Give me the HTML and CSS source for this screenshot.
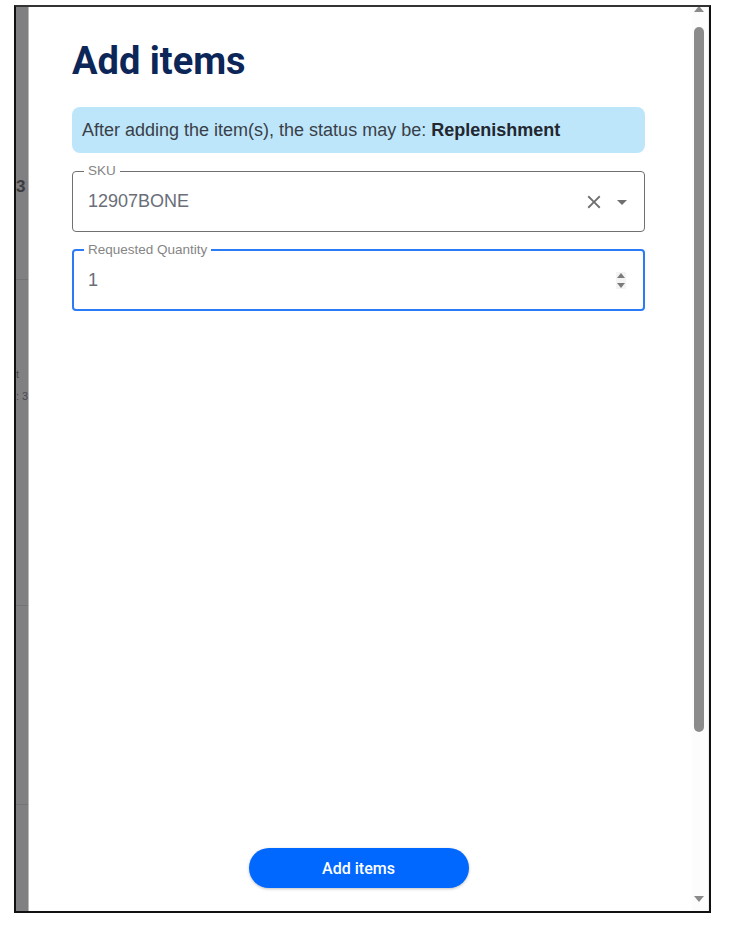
FILE: index.html
```html
<!DOCTYPE html>
<html lang="en">
<head>
<meta charset="utf-8">
<title>Add items</title>
<link rel="stylesheet" href="styles.css">
</head>
<body>
<div class="frame">
  <div class="backdrop">
    <div class="bg-row bg-row-1"><div class="bg-text bg-three">3</div></div>
    <div class="bg-row bg-row-2">
      <div class="bg-text bg-faint bg-faint-1">t</div>
      <div class="bg-text bg-faint bg-faint-2">: 3</div>
    </div>
    <div class="bg-row bg-row-3"></div>
    <div class="bg-row bg-row-4"></div>
  </div>
  <div class="dialog">
    <div class="content">
      <h1 class="title">Add items</h1>
      <div class="info">After adding the item(s), the status may be: <strong>Replenishment</strong></div>
      <div class="field field-sku">
        <span class="field-label">SKU</span>
        <span class="field-value">12907BONE</span>
        <svg class="icon-close" viewBox="0 0 24 24" width="22" height="22" aria-hidden="true"><path d="M19 6.41L17.59 5 12 10.59 6.41 5 5 6.41 10.59 12 5 17.59 6.41 19 12 13.41 17.59 19 19 17.59 13.41 12z"/></svg>
        <svg class="icon-drop" viewBox="0 0 24 24" width="24" height="24" aria-hidden="true"><path d="M7 10l5 5 5-5z"/></svg>
      </div>
      <div class="field field-qty">
        <span class="field-label">Requested Quantity</span>
        <span class="field-value">1</span>
        <span class="spinner"><svg viewBox="0 0 10 17" width="10" height="17" aria-hidden="true"><path d="M5 1L9 6H1z"/><path d="M1 11h8l-4 5z"/></svg></span>
      </div>
      <div class="spacer"></div>
      <button class="btn-add" type="button">Add items</button>
    </div>
    <div class="scrollbar">
      <svg class="sb-arrow sb-up" viewBox="0 0 10 6" width="10" height="6" aria-hidden="true"><path d="M5 0L10 6H0z"/></svg>
      <div class="sb-thumb"></div>
      <div class="sb-rest"></div>
      <svg class="sb-arrow sb-down" viewBox="0 0 10 6" width="10" height="6" aria-hidden="true"><path d="M0 0h10L5 6z"/></svg>
    </div>
  </div>
</div>
</body>
</html>
```

FILE: styles.css
```css
* { box-sizing: border-box; }
html, body { margin: 0; padding: 0; background: #ffffff; }
body { font-family: "Liberation Sans", Arial, sans-serif; }

.frame {
  margin: 5px 0 0 14px;
  width: 697px;
  height: 908px;
  border: 2px solid #111;
  border-top-color: #333;
  display: flex;
  overflow: hidden;
}

.backdrop {
  width: 12px;
  flex-shrink: 0;
  background: #808083;
  display: flex;
  flex-direction: column;
}
.bg-row { border-bottom: 1px solid #747477; }
.bg-row-1 { height: 273px; padding-top: 170px; }
.bg-row-2 { height: 326px; padding-top: 87px; }
.bg-row-3 { height: 199px; }
.bg-row-4 { flex: 1; border-bottom: 0; }
.bg-text {
  white-space: nowrap;
  color: #3c3c40;
}
.bg-three { font-weight: bold; font-size: 17px; line-height: 20px; }
.bg-faint { font-size: 11px; line-height: 14px; color: #4a4a4e; }
.bg-faint-2 { margin-top: 8px; }

.dialog {
  flex: 1;
  display: flex;
  background: #ffffff;
  border-left: 1px solid #b9b9bc;
}

.content {
  flex: 1;
  display: flex;
  flex-direction: column;
  padding: 32px 47px 23px 43px;
}

.title {
  margin: 0;
  font-family: Roboto, "Liberation Sans", sans-serif;
  font-weight: 700;
  font-size: 38px;
  line-height: 44px;
  color: #0b2657;
}

.info {
  margin-top: 24px;
  background: #bde6fb;
  border-radius: 8px;
  padding: 13px 10px;
  font-size: 18px;
  line-height: 20px;
  color: #3a3f47;
}
.info strong { color: #23272e; }

.field {
  position: relative;
  display: flex;
  align-items: center;
  border-radius: 4px;
}
.field-sku {
  margin-top: 18px;
  height: 61px;
  border: 1px solid #707070;
  padding: 0 10px 0 15px;
}
.field-qty {
  margin-top: 17px;
  height: 62px;
  border: 2px solid #2b7bf6;
  padding: 0 17px 0 14px;
}
.field-label {
  position: absolute;
  top: -9px;
  left: 11px;
  padding: 0 4px;
  background: #ffffff;
  font-size: 13.5px;
  line-height: 16px;
  color: #858585;
}
.field-qty .field-label { left: 10px; top: -9px; }
.field-value {
  flex: 1;
  font-size: 18px;
  color: #6a6e78;
}
.icon-close { fill: #6f6f6f; margin-right: 5px; }
.icon-drop { fill: #6f6f6f; }
.spinner {
  display: flex;
  width: 10px;
  height: 17px;
  background: #f4f4f4;
}
.spinner svg { fill: #7b7b7b; }

.spacer { flex: 1; }

.btn-add {
  align-self: center;
  width: 220px;
  height: 40px;
  border: 0;
  border-radius: 20px;
  background: #0068ff;
  color: #ffffff;
  font-family: Roboto, "Liberation Sans", sans-serif;
  font-weight: 500;
  font-size: 16px;
  box-shadow: 0 1px 3px rgba(0, 0, 0, 0.25);
  cursor: pointer;
}

.scrollbar {
  width: 17px;
  flex-shrink: 0;
  display: flex;
  flex-direction: column;
  align-items: center;
  padding: 0 3px 0 0;
  background: #fcfcfc;
  border-right: 1px solid #ececec;
}
.sb-arrow { fill: #8a8a8a; flex-shrink: 0; }
.sb-up { margin-top: -1px; }
.sb-thumb {
  margin-top: 15px;
  width: 10px;
  height: 705px;
  border-radius: 5px;
  background: #8b8b8b;
}
.sb-rest { flex: 1; }
.sb-down { margin-bottom: 9px; }
```
